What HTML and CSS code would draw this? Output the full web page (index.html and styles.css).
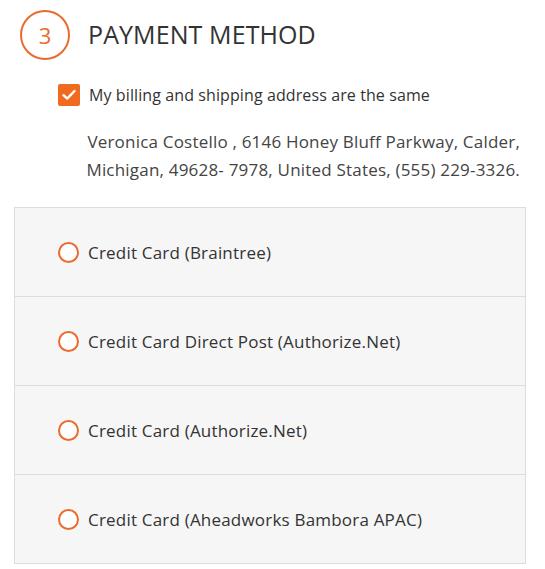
FILE: index.html
```html
<!DOCTYPE html>
<html lang="en">
<head>
	<meta charset="UTF-8">
	<title>Payment Method</title>
	<link rel="stylesheet" href="styles.css">
</head>
<body>
	<div class="checkout">
		<!-- 标题 -->
		<div class="step-title">
			<span class="step-num">3</span>
			<h2>PAYMENT METHOD</h2>
		</div>

		<!-- 地址相同 -->
		<label class="same-address">
			<span class="check">
				<svg width="14" height="12" viewBox="0 0 14 12"><path d="M1.5 6.2 L5.2 9.6 L12.5 2" fill="none" stroke="#fff" stroke-width="2.4" stroke-linecap="round" stroke-linejoin="round"/></svg>
			</span>
			<span>My billing and shipping address are the same</span>
		</label>

		<div class="address">
			Veronica Costello , 6146 Honey Bluff Parkway, Calder,<br>
			Michigan, 49628- 7978, United States, (555) 229-3326.
		</div>

		<!-- 支付方式列表 -->
		<ul class="methods">
			<li><span class="radio"></span>Credit Card (Braintree)</li>
			<li><span class="radio"></span>Credit Card Direct Post (Authorize.Net)</li>
			<li><span class="radio"></span>Credit Card (Authorize.Net)</li>
			<li><span class="radio"></span>Credit Card (Aheadworks Bambora APAC)</li>
		</ul>
	</div>
</body>
</html>
```

FILE: styles.css
```css
*{
	margin: 0;
	padding: 0;
	list-style-type: none;
	box-sizing: border-box;
}
body{
	font-family: "Open Sans", "Liberation Sans", sans-serif;
	color: #333;
	background-color: #fff;
}
.checkout{
	padding: 10px 19px 0 14px;
}
.step-title{
	display: flex;
	align-items: center;
	height: 50px;
	padding-left: 6px;
}
.step-num{
	display: flex;
	align-items: center;
	justify-content: center;
	width: 50px;
	height: 50px;
	border: 2px solid #eb6a2c;
	border-radius: 50%;
	color: #eb6a2c;
	font-size: 22px;
}
.step-title h2{
	margin-left: 18px;
	margin-top: -2px;
	font-size: 25px;
	font-weight: 500;
	color: #333;
	letter-spacing: 0.1px;
}
.same-address{
	display: flex;
	align-items: center;
	margin: 24px 0 0 44px;
	font-size: 16px;
	letter-spacing: 0.1px;
	color: #333;
}
.check{
	display: flex;
	align-items: center;
	justify-content: center;
	width: 22px;
	height: 22px;
	margin-right: 9px;
	border-radius: 2px;
	background-color: #f06a1f;
}
.address{
	margin: 22px 6px 0 40px;
	text-align: right;
	font-size: 17px;
	line-height: 28px;
	letter-spacing: 0.2px;
	color: #444;
}
.methods{
	margin-top: 23px;
	border: 1px solid #ddd;
	background-color: #f6f6f6;
}
.methods li{
	display: flex;
	align-items: center;
	height: 89px;
	padding-left: 43px;
	border-top: 1px solid #ddd;
	font-size: 17px;
	letter-spacing: 0.2px;
	color: #333;
}
.methods li:first-child{
	border-top: none;
	height: 88px;
}
.radio{
	width: 21px;
	height: 21px;
	margin-right: 9px;
	border: 2px solid #eb6a2c;
	border-radius: 50%;
	background-color: #fff;
}
```
